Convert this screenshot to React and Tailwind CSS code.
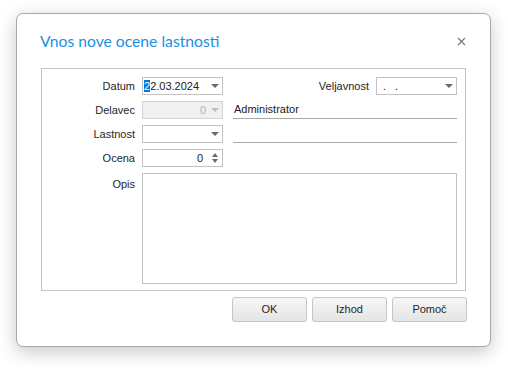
import React from "react";

const font = { fontFamily: '"Liberation Sans", Arial, sans-serif' };

const Arrow = ({ light }) => (
  <span
    className={`w-0 h-0 border-l-[4px] border-r-[4px] border-t-[4px] border-l-transparent border-r-transparent ${
      light ? "border-t-[#c0c0c0]" : "border-t-[#6a6a6a]"
    }`}
  />
);

const Label = ({ children, top }) => (
  <div
    className={`w-[93px] shrink-0 text-right text-[11px] text-[#262626] ${
      top ? "pt-[3px]" : "leading-[18px]"
    }`}
  >
    {children}
  </div>
);

const Combo = ({ children, disabled }) => (
  <div
    className={`ml-[7px] w-[81px] h-[18px] shrink-0 border flex items-center pl-[1px] pr-[3px] ${
      disabled ? "bg-[#f0f0f0] border-[#d4d4d4]" : "bg-white border-[#c2c2c2]"
    }`}
  >
    <div className="flex-1 text-[11px] leading-[16px] overflow-hidden whitespace-nowrap">
      {children}
    </div>
    <div className="w-[8px] flex justify-center">
      <Arrow light={disabled} />
    </div>
  </div>
);

export default function App() {
  return (
    <div className="w-[508px] h-[368px] bg-white pl-[16px] pt-[13px]" style={font}>
      <div className="w-[475px] h-[334px] bg-white border border-[#a8a8a8] rounded-[7px] shadow-[0_5px_18px_rgba(0,0,0,0.22)] flex flex-col">
        {/* Title */}
        <div className="flex items-start pl-[23px] pr-[23px] pt-[16px] h-[54px]">
          <div
            className="flex-1 text-[15.7px] leading-[22px] text-[#1b90e2]"
            style={{ fontFamily: "Lato, 'Open Sans', sans-serif" }}
          >
            Vnos nove ocene lastnosti
          </div>
          <svg width="9" height="9" viewBox="0 0 9 9" className="mt-[7px] mr-[1px]">
            <path d="M1 1L8 8M8 1L1 8" stroke="#777" strokeWidth="1.2" />
          </svg>
        </div>

        {/* Group box */}
        <div className="ml-[24px] w-[425px] h-[223px] border border-[#c4c4c4] pt-[8px] pr-[8px] flex flex-col gap-[6px]">
          <div className="flex items-center h-[18px]">
            <Label>Datum</Label>
            <Combo>
              <span className="bg-[#0078d7] text-white">2</span>
              <span className="text-[#222]">2.03.2024</span>
            </Combo>
            <div className="flex-1 text-right text-[11px] text-[#262626]">Veljavnost</div>
            <Combo>
              <span className="text-[#222] pl-[5px] tracking-[3px]">. .</span>
            </Combo>
          </div>

          <div className="flex items-center h-[18px]">
            <Label>Delavec</Label>
            <Combo disabled>
              <div className="text-right pr-[5px] text-[#b0b0b0]">0</div>
            </Combo>
            <div className="ml-[10px] flex-1 h-[17px] border-b border-[#a9a9a9] text-[11px] leading-[15px] text-[#222] pl-[1px]">
              Administrator
            </div>
          </div>

          <div className="flex items-center h-[18px]">
            <Label>Lastnost</Label>
            <Combo />
            <div className="ml-[10px] flex-1 h-[17px] border-b border-[#a9a9a9]" />
          </div>

          <div className="flex items-center h-[18px]">
            <Label>Ocena</Label>
            <div className="ml-[7px] w-[81px] h-[18px] border border-[#c2c2c2] bg-white flex items-center pr-[3px]">
              <div className="flex-1 text-right pr-[8px] text-[11px] leading-[16px] text-[#222]">0</div>
              <div className="w-[8px] flex flex-col items-center gap-[2px]">
                <span className="w-0 h-0 border-l-[3px] border-r-[3px] border-b-[4px] border-l-transparent border-r-transparent border-b-[#6a6a6a]" />
                <span className="w-0 h-0 border-l-[3px] border-r-[3px] border-t-[4px] border-l-transparent border-r-transparent border-t-[#6a6a6a]" />
              </div>
            </div>
          </div>

          <div className="flex items-start">
            <Label top>Opis</Label>
            <div className="ml-[7px] flex-1 h-[111px] border border-[#c2c2c2] bg-white" />
          </div>
        </div>

        {/* Buttons */}
        <div className="flex justify-end gap-[5px] pr-[23px] pt-[6px]">
          {["OK", "Izhod", "Pomoč"].map((b) => (
            <button
              key={b}
              className="w-[75px] h-[25px] rounded-[3px] border border-[#c6c6c6] bg-gradient-to-b from-[#f7f7f7] to-[#e4e4e4] text-[11px] text-[#262626]"
            >
              {b}
            </button>
          ))}
        </div>
      </div>
    </div>
  );
}
